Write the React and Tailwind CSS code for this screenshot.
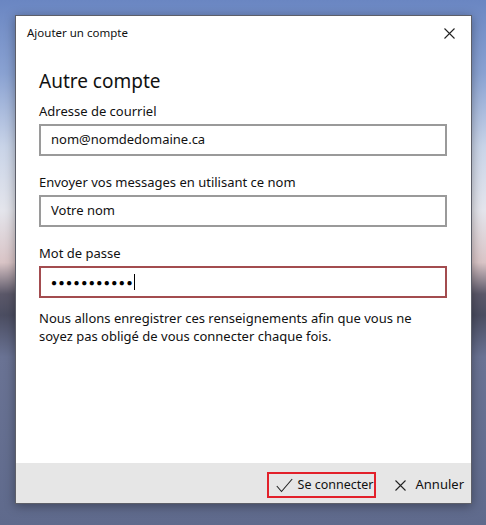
import React from 'react';

const font = { fontFamily: '"Noto Sans", "Open Sans", Arial, sans-serif' };

const Field = ({ label, children, danger = false, first = false }) =>
<div className={first ? '' : 'mt-[16px]'}>
    <div className="text-[13px] leading-5 text-[#111] mb-[3px]">{label}</div>
    <div
    className={`h-[32px] w-[408px] border-2 flex items-center pl-[10px] text-[13px] text-[#111] ${danger ? 'border-[#a34c4f]' : 'border-[#9a9a9a]'}`}>
      {children}
    </div>
  </div>;


export default function App() {
  return (
    <div
      className="w-[486px] h-[525px] pt-[15px] pl-[15px] bg-[linear-gradient(180deg,#6a86c2_0%,#8aa2d2_14%,#c9d4e8_28%,#e4e5ec_40%,#d9c4c6_50%,#5b5869_56%,#4b4d61_60%,#6a7394_68%,#5f6a8c_100%)]"
      style={font}>
      <div className="w-[457px] h-[489px] bg-white border border-[#5d5f69] flex flex-col shadow-[0_2px_10px_rgba(0,0,0,0.35)]">
        {/* title bar */}
        <div className="h-[34px] flex items-center justify-between pl-[11px] pr-[16px] shrink-0">
          <span className="text-[11.5px] text-[#111]">Ajouter un compte</span>
          <svg width="11" height="11" viewBox="0 0 11 11" aria-hidden>
            <path d="M0.5 0.5 L10.5 10.5 M10.5 0.5 L0.5 10.5" stroke="#222" strokeWidth="1.1" fill="none" />
          </svg>
        </div>

        {/* content */}
        <div className="flex-1 pl-[23px] pt-[17px]">
          <div className="text-[19px] leading-7 text-[#111] mb-[6px]">Autre compte</div>

          <Field label="Adresse de courriel" first>nom@nomdedomaine.ca</Field>
          <Field label="Envoyer vos messages en utilisant ce nom">Votre nom</Field>
          <Field label="Mot de passe" danger>
            <span className="text-[10px] tracking-[1.5px] text-black">●●●●●●●●●●●</span>
            <span className="w-px h-[16px] bg-black" />
          </Field>

          <p className="mt-[11px] text-[13px] leading-[18px] text-[#111] w-[400px]">
            Nous allons enregistrer ces renseignements afin que vous ne soyez pas obligé de vous connecter chaque fois.
          </p>
        </div>

        {/* footer */}
        <div className="h-[40px] bg-[#e6e6e6] flex items-start justify-end pt-[9px] pr-[7px] shrink-0">
          <div className="h-[26px] w-[109px] border-2 border-[#e2202a] flex items-center pl-[7px] whitespace-nowrap">
            <svg width="17" height="15" viewBox="0 0 17 15" aria-hidden className="shrink-0">
              <path d="M0.8 8 L5.5 13.5 L16.2 1" stroke="#222" strokeWidth="1.1" fill="none" />
            </svg>
            <span className="ml-[5px] text-[12.5px] text-[#111]">Se connecter</span>
          </div>
          <div className="h-[26px] flex items-center ml-[19px] whitespace-nowrap">
            <svg width="11" height="11" viewBox="0 0 11 11" aria-hidden className="shrink-0">
              <path d="M0.5 0.5 L10.5 10.5 M10.5 0.5 L0.5 10.5" stroke="#222" strokeWidth="1.1" fill="none" />
            </svg>
            <span className="ml-[10px] text-[13px] text-[#111]">Annuler</span>
          </div>
        </div>
      </div>
    </div>);

}
